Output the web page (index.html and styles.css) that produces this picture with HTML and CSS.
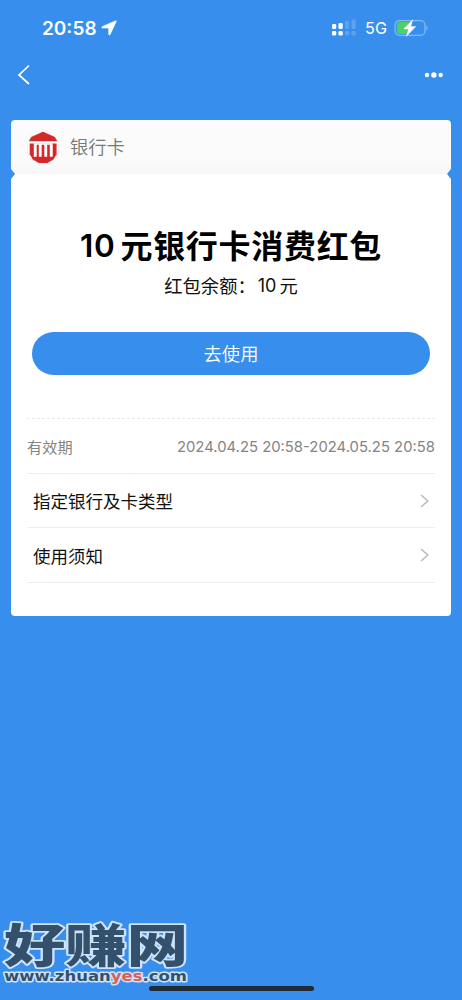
FILE: index.html
```html
<!DOCTYPE html>
<html lang="zh-CN">
<head>
<meta charset="utf-8">
<title>10元银行卡消费红包</title>
<link rel="stylesheet" href="styles.css">
</head>
<body>
<div class="screen">
  <header class="status">
    <span class="time">20:58</span>
    <svg class="location" width="16" height="16" viewBox="0 0 16 16"><path d="M14.600.9 1.200 6.700C.6 7 .7 7.900 1.400 7.900h6.400v6.400c0 .8.9.9 1.200.2L15.200 1.500c.2-.4-.1-.8-.6-.6Z" fill="#fff" stroke="#fff" stroke-width=".8"/></svg>
    <svg class="signal" width="24" height="17" viewBox="0 0 24 17">
      <g fill="#fff"><rect x="0" y="5" width="4.200" height="5" rx="1.300"/><rect x="6.500" y="4" width="4.200" height="6" rx="1.300"/><rect x="0" y="12" width="4.200" height="4.500" rx="1.300"/><rect x="6.500" y="12" width="4.200" height="4.500" rx="1.300"/></g>
      <g fill="#5ba3f1"><rect x="13" y="2" width="4.200" height="8" rx="1.300"/><rect x="19.500" y="0.500" width="4.200" height="9.500" rx="1.300"/><rect x="13" y="12" width="4.200" height="4.500" rx="1.300"/><rect x="19.500" y="12" width="4.200" height="4.500" rx="1.300"/></g>
    </svg>
    <span class="network">5G</span>
    <svg class="battery" width="35" height="18" viewBox="0 0 35 18">
      <rect x="1.100" y="1.600" width="29.800" height="14.800" rx="4.300" fill="none" stroke="#83b9f2" stroke-width="1.200"/>
      <path d="M5.500 3H15v12H5.500A2.700 2.700 0 0 1 2.800 12.300V5.700A2.700 2.700 0 0 1 5.500 3Z" fill="#4bd165"/>
      <path d="M32.300 6.500c1.700.8 1.700 4.200 0 5Z" fill="#83b9f2"/>
      <path d="M18.700.7 9.700 10h4.900L12.300 17.400l9.500-9.800h-5Z" fill="#fff" stroke="#fff" stroke-width=".4"/>
    </svg>
  </header>
  <nav class="nav">
    <svg width="14" height="22" viewBox="0 0 14 22"><path d="M12 1.500 2 11l10 9" fill="none" stroke="#fff" stroke-width="1.700"/></svg>
    <svg width="20" height="8" viewBox="0 0 20 8" fill="#fff"><circle cx="3" cy="4" r="2.200"/><circle cx="9.900" cy="4" r="2.700"/><circle cx="16.700" cy="4" r="2.200"/></svg>
  </nav>
  <main class="card">
    <div class="bank">
      <svg class="logo" width="32" height="33" viewBox="0 0 32 33">
        <path d="M16 .6 22 2.800 28.600 6.400 31.500 11.500V22L28.500 27.500 21 32.300H11L3.800 27.500.6 22V11.500L3.400 6.400Z" fill="#fff" stroke="#e2e2e2" stroke-width=".6"/>
        <path d="M16 .8 27.800 6 30.300 10.200H1.800L4.300 6Z" fill="#d3292b"/>
        <path d="M2.700 12.600h26.900v10.600l-3.200 5.300-6 3.400h-8.600l-6-3.400-3.100-5.300Z" fill="#d3292b"/>
        <path d="M6.800 12.200h18.900v13.500h-2.900V13.800h-2.600v11.900h-2.900V13.800h-2.600v11.900h-2.900V13.800H9.700v11.900H6.800Z" fill="#fff"/>
      </svg>
      <span class="bank-name">银行卡</span>
    </div>
    <section class="coupon">
      <h1 class="title"><span class="amount">10</span>元银行卡消费红包</h1>
      <p class="balance">红包余额：<span class="value">10</span>元</p>
      <a class="use">去使用</a>
      <div class="details">
        <div class="validity"><span class="label">有效期</span><span class="dates">2024.04.25 20:58-2024.05.25 20:58</span></div>
        <div class="row"><span>指定银行及卡类型</span><svg width="9" height="14" viewBox="0 0 9 14"><path d="m1 1 6.800 6L1 13" fill="none" stroke="#bbb" stroke-width="1.600"/></svg></div>
        <div class="row last"><span>使用须知</span><svg width="9" height="14" viewBox="0 0 9 14"><path d="m1 1 6.800 6L1 13" fill="none" stroke="#bbb" stroke-width="1.600"/></svg></div>
      </div>
    </section>
  </main>
  <div class="home-bar"></div>
  <svg class="watermark" width="200" height="80" viewBox="0 0 200 80">
    <text class="mark-name" x="4" y="42" textLength="184" lengthAdjust="spacingAndGlyphs">好赚网</text>
    <text class="mark-url" x="4" y="61" textLength="183" lengthAdjust="spacingAndGlyphs">www.zhuan<tspan class="mark-yes">yes</tspan>.com</text>
  </svg>
</div>
</body>
</html>
```
FILE: styles.css
```css
* { box-sizing: border-box; }
body { margin: 0; background: #388eec; font-family: Inter, "Noto Sans CJK SC", sans-serif; }
.screen { position: relative; height: 1000px; overflow: hidden; display: flex; flex-direction: column; }
.status { height: 55px; display: flex; align-items: center; padding: 0 33px 0 42px; color: #fff; }
.time { font-size: 19px; font-weight: 600; line-height: 24px; padding-top: 2px; }
.location { margin-left: 4px; }
.signal { margin-left: auto; }
.network { font-size: 16.2px; margin: 1px 7px 0 9px; line-height: 20px; }
.nav { height: 65px; padding: 0 18px 26px 17px; display: flex; align-items: center; justify-content: space-between; }
.card { margin: 0 11px; height: 496px; display: flex; flex-direction: column; }
.bank { height: 54px; padding: 0 16px; display: flex; align-items: center; gap: 11px; border-radius: 4px 4px 0 0; background: linear-gradient(#fbfbfb 75%, #f6f6f6); clip-path: polygon(0 0, 100% 0, 100% 49px, calc(100% - 4px) 100%, 4px 100%, 0 49px); }
.bank-name { font-size: 18.3px; line-height: 28px; color: #777; font-weight: 350; }
.coupon { height: 442px; padding: 48px 16px 0; display: flex; flex-direction: column; background: #fff; border-radius: 0 0 4px 4px; clip-path: polygon(4px 0, calc(100% - 4px) 0, 100% 5px, 100% 100%, 0 100%, 0 5px); }
.title { margin: 0; height: 45px; display: flex; justify-content: center; font-size: 32px; line-height: 44px; font-weight: 600; font-family: "Noto Sans CJK SC", sans-serif; letter-spacing: .7px; color: #000; }
.amount { font-family: Inter, sans-serif; font-size: 31.5px; margin-right: 5px; padding-top: 2px; }
.balance { margin: 5px 0 0; height: 28px; line-height: 28px; display: flex; justify-content: center; font-size: 18.3px; color: #111; }
.value { margin: 0 3px 0 2px; font-size: 18px; }
.use { height: 43px; margin: 32px 5px 0; border-radius: 22px; background: #388eec; color: #fff; text-align: center; font-size: 18.3px; font-weight: 350; line-height: 44px; }
.details { margin-top: 43px; border-top: 1px dashed #ebebeb; }
.validity { height: 55px; display: flex; align-items: center; justify-content: space-between; border-bottom: 1px solid #eee; font-size: 15.2px; color: #848484; }
.dates { font-size: 14.85px; white-space: nowrap; padding-top: 2px; }
.row { height: 54px; padding: 0 6px; display: flex; align-items: center; justify-content: space-between; border-bottom: 1px solid #eee; font-size: 17.5px; color: #111; }
.last { height: 55px; }
.home-bar { position: absolute; left: 149px; top: 986px; width: 165px; height: 5px; border-radius: 3px; background: #1e2b35; }
.watermark { position: absolute; left: 0; top: 920px; }
.mark-name, .mark-url { fill: #33516c; stroke: #cce3fb; paint-order: stroke; stroke-linejoin: round; }
.mark-name { font: 900 46px "Noto Sans CJK SC", sans-serif; stroke-width: 3.5px; }
.mark-url { font: bold 14px "DejaVu Sans", sans-serif; stroke-width: 3px; }
.mark-yes { fill: #d95f58; }
```
